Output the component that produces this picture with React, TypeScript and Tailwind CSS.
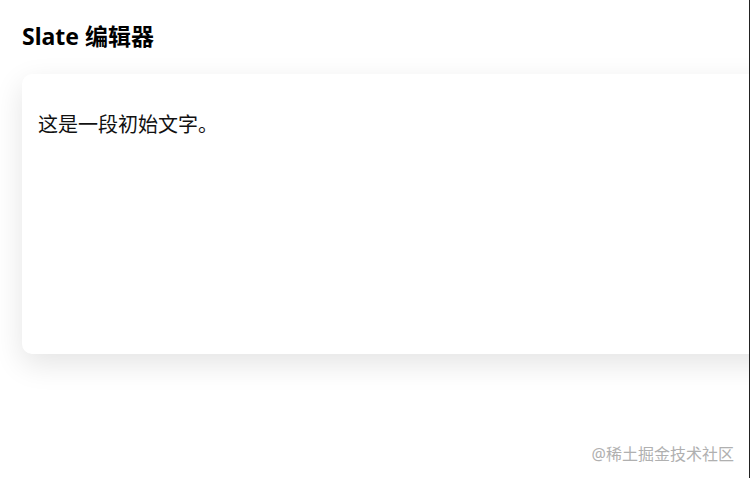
export default function App() {
  return (
    <div
      className="relative h-[478px] w-[750px] overflow-hidden border-r border-[#222] bg-white"
      style={{ fontFamily: '"Noto Sans", "Noto Sans CJK SC", sans-serif' }}
    >
      <div className="pl-[22px] pt-[19px]">
        <h1 className="text-[23px] font-bold leading-[34px] text-black">Slate 编辑器</h1>
        <div className="mt-[21px] -mr-[40px] h-[280px] rounded-[10px] bg-white px-[16px] pt-[37px] shadow-[0_10px_30px_rgba(0,0,0,0.11)]">
          <p className="text-[20px] leading-[28px] text-[#111]">这是一段初始文字。</p>
        </div>
      </div>
      <div className="absolute bottom-[12px] right-[15px] text-[16px] text-[#b0b0b0]">@稀土掘金技术社区</div>
    </div>
  );
}
